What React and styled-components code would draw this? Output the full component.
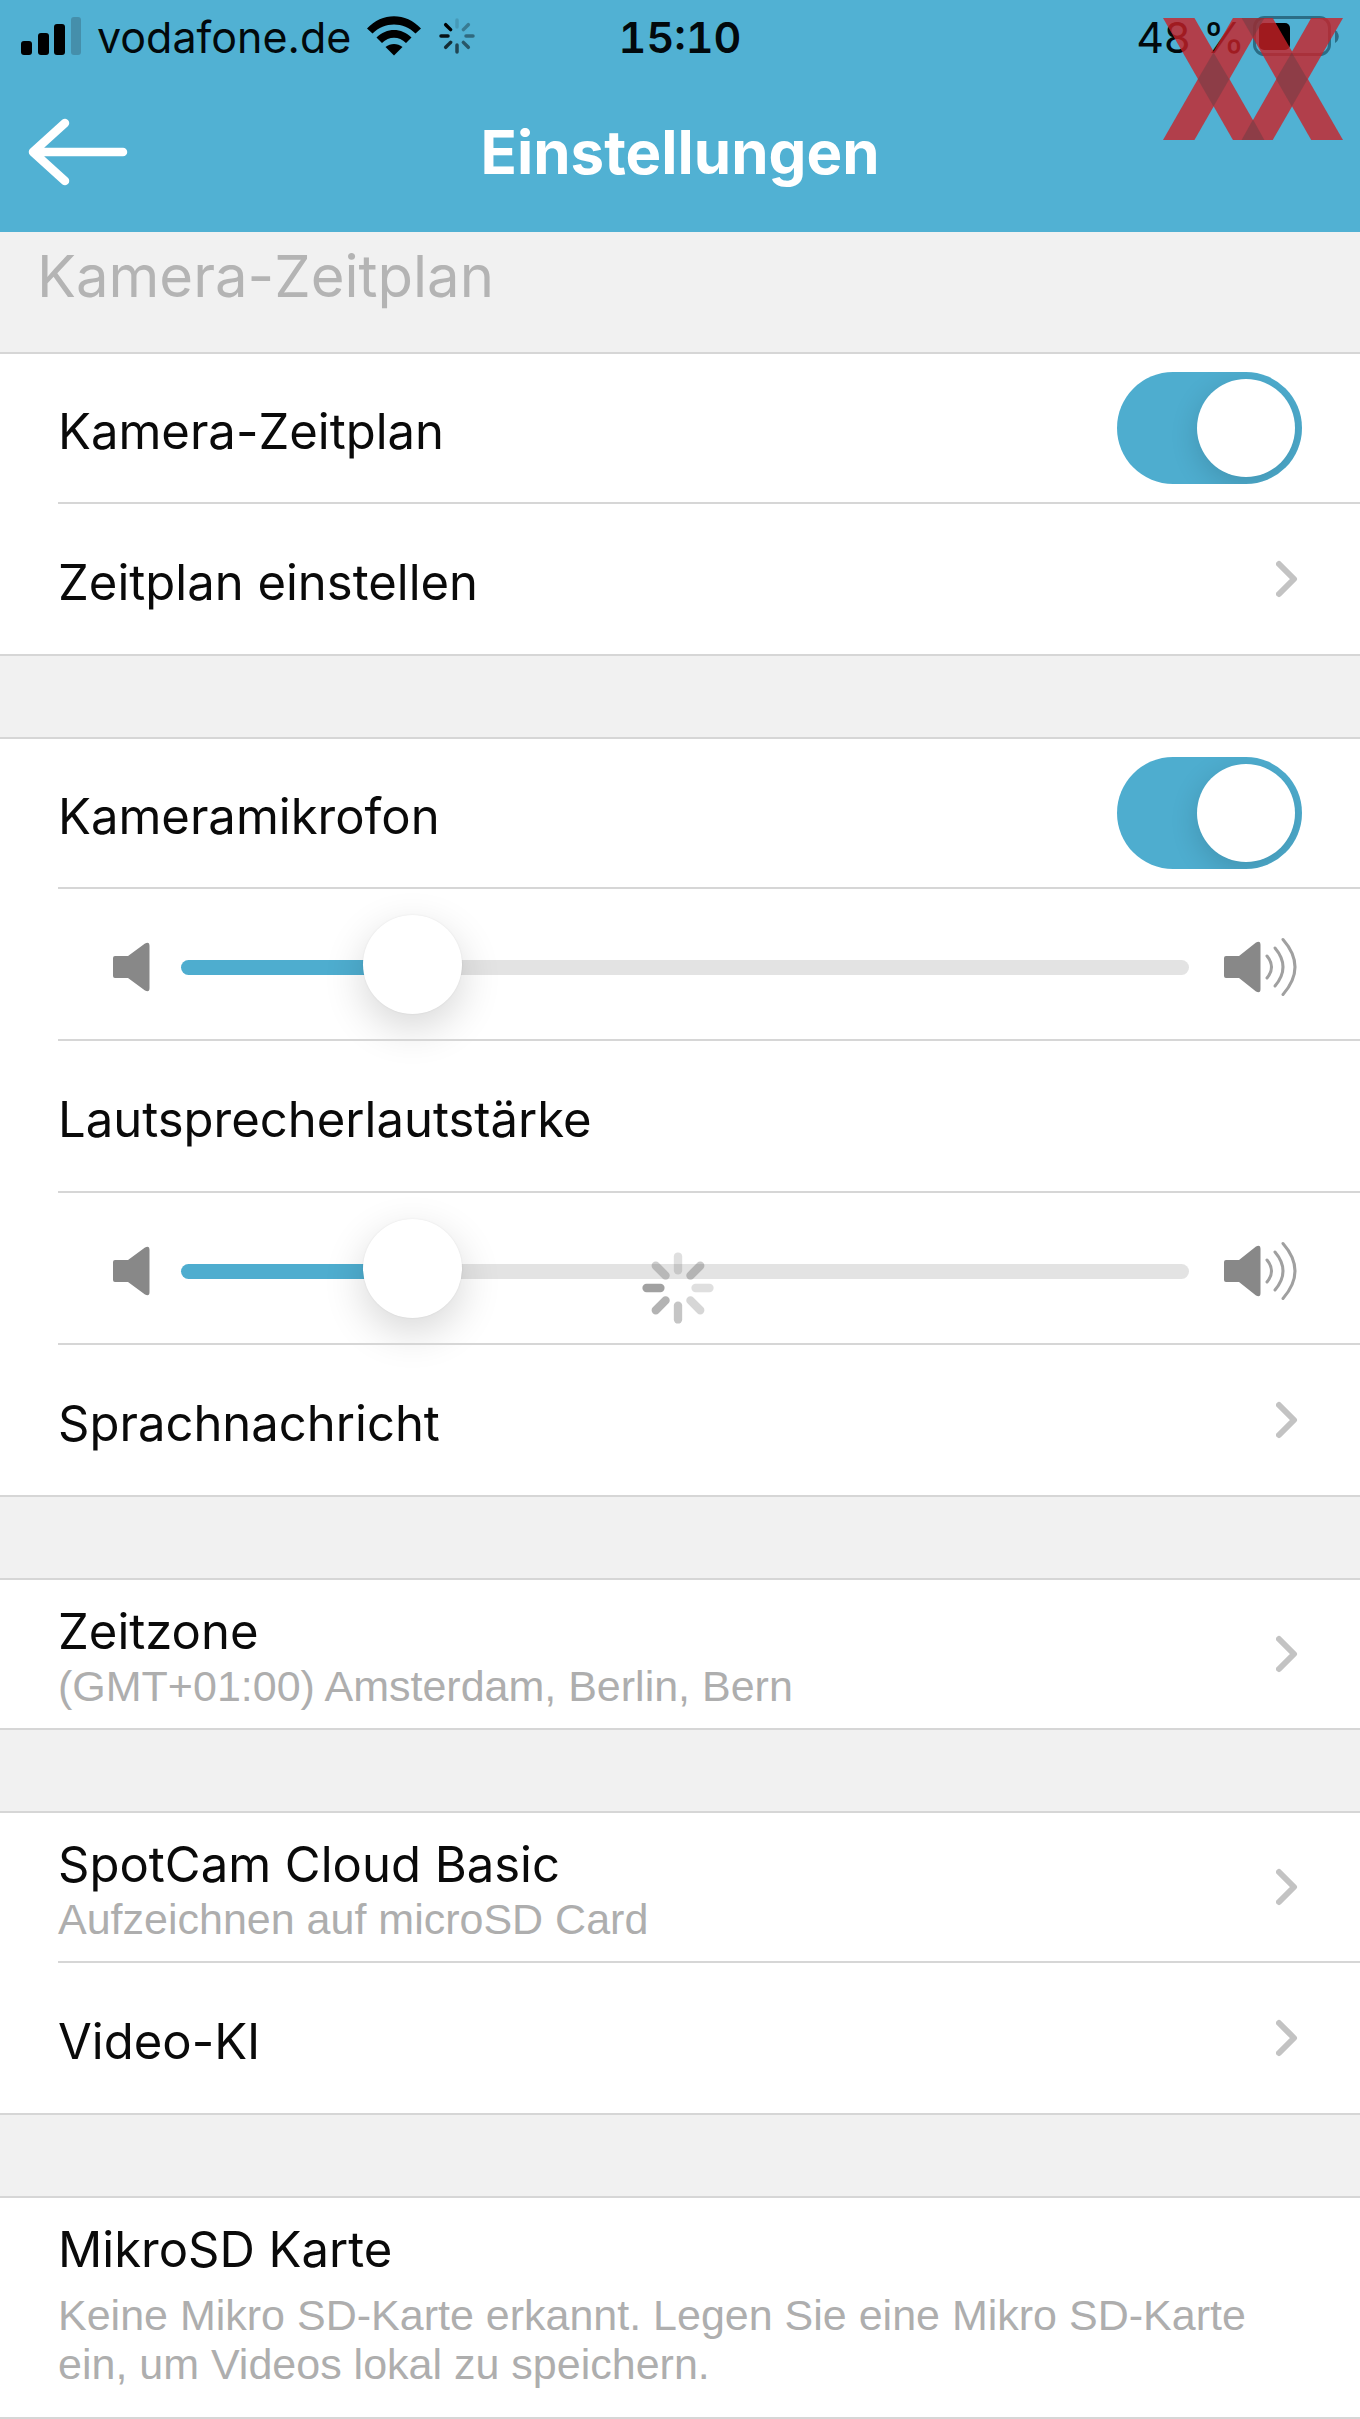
import React, { useState } from "react";
import styled, { createGlobalStyle } from "styled-components";

const GlobalStyle = createGlobalStyle`
  * {
    box-sizing: border-box;
  }

  body {
    margin: 0;
    background: #f1f1f1;
    font-family: Inter, Roboto, sans-serif;
    color: #0a0a0a;
  }
`;

const Header = styled.header`
  position: relative;
  background: #51b1d3;
`;

const StatusBar = styled.div`
  display: grid;
  grid-template-columns: 1fr auto 1fr;
  align-items: center;
  height: 72px;
  padding: 0 21px;
  font-size: 43px;
  line-height: 52px;
  color: #02090c;
`;

const StatusGroup = styled.div`
  display: flex;
  align-items: center;
  gap: ${(props) => (props.$end ? "8px" : "16px")};
  justify-content: ${(props) => (props.$end ? "flex-end" : "flex-start")};
`;

const StatusText = styled.span`
  padding-top: 2px;
`;

const Clock = styled.time`
  padding-top: 2px;
  font-weight: 600;
  font-variant-numeric: tabular-nums;
`;

const NavBar = styled.div`
  display: grid;
  grid-template-columns: 1fr auto 1fr;
  align-items: center;
  height: 160px;
  padding: 0 24px;
`;

const BackButton = styled.button`
  display: flex;
  justify-self: start;
  padding: 0;
  border: 0;
  background: none;
  cursor: pointer;
`;

const Title = styled.h1`
  margin: 0;
  font-size: 60px;
  line-height: 72px;
  font-weight: 700;
  color: #fff;
`;

const Watermark = styled.svg`
  position: absolute;
  top: 18px;
  right: 17px;
`;

const SectionTitle = styled.h2`
  margin: 0;
  height: 120px;
  padding: 8px 37px 0;
  font-size: 58px;
  line-height: 72px;
  font-weight: 400;
  color: #b4b4b4;
`;

const Group = styled.section`
  padding-left: 58px;
  background: #fff;
  border-top: 2px solid #d6d6d6;
  border-bottom: 2px solid #d6d6d6;

  & + & {
    margin-top: 81px;
  }
`;

const Row = styled.div`
  position: relative;
  display: flex;
  align-items: center;
  justify-content: space-between;
  min-height: 150px;
  padding-right: 58px;
  color: inherit;
  text-decoration: none;

  &:first-child {
    min-height: 148px;
  }

  & + & {
    border-top: 2px solid #d6d6d6;
    min-height: 152px;
  }
`;

const RowText = styled.div`
  padding-top: ${(props) => (props.$twoLines ? "4px" : "8px")};
`;

const Label = styled.span`
  display: block;
  font-size: 49px;
  line-height: 60px;
`;

const Hint = styled.span`
  display: block;
  font-family: "Liberation Sans", Arial, sans-serif;
  font-size: 43px;
  line-height: 49px;
  color: #aeaeae;
`;

const Note = styled.div`
  display: flex;
  flex-direction: column;
  gap: 11px;
  padding: 22px 58px 28px 0;
`;

const Switch = styled.input`
  appearance: none;
  display: flex;
  align-items: center;
  justify-content: ${(props) => (props.checked ? "flex-end" : "flex-start")};
  width: 185px;
  height: 112px;
  margin: 0;
  padding: 7px;
  border-radius: 56px;
  overflow: hidden;
  background: ${(props) => (props.checked ? "#4eadcf" : "#e3e3e3")};
  cursor: pointer;

  &::before {
    content: "";
    width: 98px;
    height: 98px;
    border-radius: 50%;
    background: #fff;
    box-shadow: 0 8px 28px rgba(0, 0, 0, 0.15);
  }
`;

const SliderRow = styled(Row)`
  justify-content: flex-start;
  padding: 6px 58px 0 54px;
`;

const Range = styled.input`
  appearance: none;
  flex: 1;
  min-width: 0;
  height: 99px;
  margin: 0 34px 0 31px;
  background: none;
  cursor: pointer;

  &::-webkit-slider-runnable-track {
    height: 15px;
    border-radius: 8px;
    background: linear-gradient(
      to right,
      #4eadcf var(--fill),
      #e3e3e3 var(--fill)
    );
  }

  &::-webkit-slider-thumb {
    appearance: none;
    width: 99px;
    height: 99px;
    margin-top: -45px;
    border: 0;
    border-radius: 50%;
    background: #fff;
    box-shadow: 0 0 2px rgba(0, 0, 0, 0.08), 0 14px 42px rgba(0, 0, 0, 0.16);
  }
`;

const Loading = styled.div`
  position: absolute;
  top: 58px;
  left: 583px;
  display: flex;
`;

const bladeOpacity = [0.14, 0.24, 0.14, 0.18, 0.26, 0.34, 0.42, 0.22];

function Spinner({ size, inner, outer, width, opacities, color }) {
  return (
    <svg width={size} height={size} viewBox="-40 -40 80 80" aria-hidden="true">
      {opacities.map((opacity, i) => (
        <line
          key={i}
          y1={-inner}
          y2={-outer}
          stroke={color}
          strokeWidth={width}
          strokeLinecap="round"
          opacity={opacity}
          transform={`rotate(${i * 45})`}
        />
      ))}
    </svg>
  );
}

function SignalIcon() {
  return (
    <svg width="60" height="38" viewBox="0 0 60 38" aria-hidden="true">
      <rect x="0" y="24" width="11" height="14" rx="3" />
      <rect x="17" y="16" width="11" height="22" rx="3" />
      <rect x="33" y="7" width="11" height="31" rx="3" />
      <rect x="50" y="0" width="10" height="38" rx="3" fill="#458fab" />
    </svg>
  );
}

function WifiIcon() {
  return (
    <svg width="54" height="40" viewBox="0 0 54 40" aria-hidden="true">
      <path d="M0 12.5C15-4 39-4 54 12.5L48.5 17.5C36.500 5.500 17.500 5.500 5.500 17.500Z" />
      <path d="M9.500 21.500C19.500 11.500 34.500 11.500 44.500 21.500L39 27C32 20 22 20 15 27Z" />
      <path d="M18.500 31C23.500 27 30.500 27 35.500 31L27 39.500Z" />
    </svg>
  );
}

function BatteryIcon() {
  return (
    <svg width="86" height="40" viewBox="0 0 86 40" aria-hidden="true">
      <rect
        x="1.500"
        y="1.500"
        width="75"
        height="37"
        rx="10"
        fill="none"
        stroke="#2b6d86"
        strokeWidth="3"
      />
      <rect x="6" y="7" width="31" height="27" rx="5" />
      <path d="M82 14C87 17 87 24 82 27Z" fill="#2b6d86" />
    </svg>
  );
}

function Chevron() {
  return (
    <svg width="26" height="38" viewBox="0 0 26 38" aria-hidden="true">
      <path
        d="M3 4L18 19L3 34"
        fill="none"
        stroke="#c3c3c3"
        strokeWidth="6"
        strokeLinecap="round"
        strokeLinejoin="round"
      />
    </svg>
  );
}

function SpeakerLow() {
  return (
    <svg width="38" height="50" viewBox="0 0 38 50" aria-hidden="true">
      <path
        d="M3 14H16L33 1.500Q37.500 -1 37.500 4V46Q37.500 51 33 48.500L16 36H3Q1 36 1 34V16Q1 14 3 14Z"
        fill="#888"
      />
    </svg>
  );
}

function SpeakerHigh() {
  return (
    <svg width="79" height="60" viewBox="0 0 79 60" aria-hidden="true">
      <path
        d="M3 19H16L33 5.500Q37.500 3 37.500 8V52Q37.500 57 33 54.500L16 41H3Q1 41 1 39V21Q1 19 3 19Z"
        fill="#888"
      />
      <g fill="none" stroke="#a0a0a0" strokeWidth="3" strokeLinecap="round">
        <path d="M44 19Q53 30 44 41" />
        <path d="M52 11Q68 30 52 49" />
        <path d="M60 2.500Q84 30 60 57.500" />
      </g>
    </svg>
  );
}

function ToggleRow({ id, label }) {
  const [on, setOn] = useState(true);

  return (
    <Row>
      <RowText>
        <Label as="label" htmlFor={id}>
          {label}
        </Label>
      </RowText>
      <Switch
        id={id}
        type="checkbox"
        role="switch"
        checked={on}
        onChange={() => setOn(!on)}
      />
    </Row>
  );
}

function LinkRow({ label, hint }) {
  return (
    <Row as="a" href="#">
      <RowText $twoLines={Boolean(hint)}>
        <Label>{label}</Label>
        {hint && <Hint>{hint}</Hint>}
      </RowText>
      <Chevron />
    </Row>
  );
}

function VolumeRow({ label, children }) {
  const [value, setValue] = useState(20);

  return (
    <SliderRow>
      <SpeakerLow />
      <Range
        type="range"
        min="0"
        max="100"
        aria-label={label}
        value={value}
        onChange={(e) => setValue(Number(e.target.value))}
        style={{ "--fill": `${value}%` }}
      />
      <SpeakerHigh />
      {children}
    </SliderRow>
  );
}

function App() {
  return (
    <>
      <GlobalStyle />
      <Header>
        <StatusBar>
          <StatusGroup>
            <SignalIcon />
            <StatusText>vodafone.de</StatusText>
            <WifiIcon />
            <Spinner
              size={40}
              inner={18}
              outer={32}
              width={7}
              color="#000"
              opacities={[0.12, 0.3, 0.4, 0.5, 0.6, 0.75, 0.9, 1]}
            />
          </StatusGroup>
          <Clock>15:10</Clock>
          <StatusGroup $end>
            <StatusText>48 %</StatusText>
            <BatteryIcon />
          </StatusGroup>
        </StatusBar>
        <NavBar>
          <BackButton type="button" aria-label="Zurück">
            <svg width="108" height="76" viewBox="0 0 108 76">
              <path
                d="M41 9L9 38L41 67M9 38H99"
                fill="none"
                stroke="#fff"
                strokeWidth="8.500"
                strokeLinecap="round"
                strokeLinejoin="round"
              />
            </svg>
          </BackButton>
          <Title>Einstellungen</Title>
        </NavBar>
        <Watermark
          width="180"
          height="122"
          viewBox="310 54 538 364"
          aria-hidden="true"
        >
          <g fill="#cb2127" opacity="0.79">
            <path d="M310 54H404L613 418H519Z" />
            <path d="M519 54H613L404 418H310Z" />
            <path d="M545 54H638L848 418H753Z" />
            <path d="M753 54H848L638 418H545Z" />
          </g>
          <g fill="#5a3c42" opacity="0.4">
            <path d="M461 157L508 237L461 318L414 237Z" />
            <path d="M695 157L742 237L695 318L648 237Z" />
            <path d="M545 54H613L579 113Z" />
            <path d="M545 418H613L579 357Z" />
          </g>
        </Watermark>
      </Header>

      <main>
        <SectionTitle>Kamera-Zeitplan</SectionTitle>

        <Group>
          <ToggleRow id="zeitplan" label="Kamera-Zeitplan" />
          <LinkRow label="Zeitplan einstellen" />
        </Group>

        <Group>
          <ToggleRow id="mikrofon" label="Kameramikrofon" />
          <VolumeRow label="Mikrofonlautstärke" />
          <Row>
            <RowText>
              <Label>Lautsprecherlautstärke</Label>
            </RowText>
          </Row>
          <VolumeRow label="Lautsprecherlautstärke">
            <Loading>
              <Spinner
                size={74}
                inner={19}
                outer={34}
                width={9}
                color="#222"
                opacities={bladeOpacity}
              />
            </Loading>
          </VolumeRow>
          <LinkRow label="Sprachnachricht" />
        </Group>

        <Group>
          <LinkRow
            label="Zeitzone"
            hint="(GMT+01:00) Amsterdam, Berlin, Bern"
          />
        </Group>

        <Group>
          <LinkRow
            label="SpotCam Cloud Basic"
            hint="Aufzeichnen auf microSD Card"
          />
          <LinkRow label="Video-KI" />
        </Group>

        <Group>
          <Note>
            <Label>MikroSD Karte</Label>
            <Hint>
              Keine Mikro SD-Karte erkannt. Legen Sie eine Mikro SD-Karte ein,
              um Videos lokal zu speichern.
            </Hint>
          </Note>
        </Group>
      </main>
    </>
  );
}

export default App;
